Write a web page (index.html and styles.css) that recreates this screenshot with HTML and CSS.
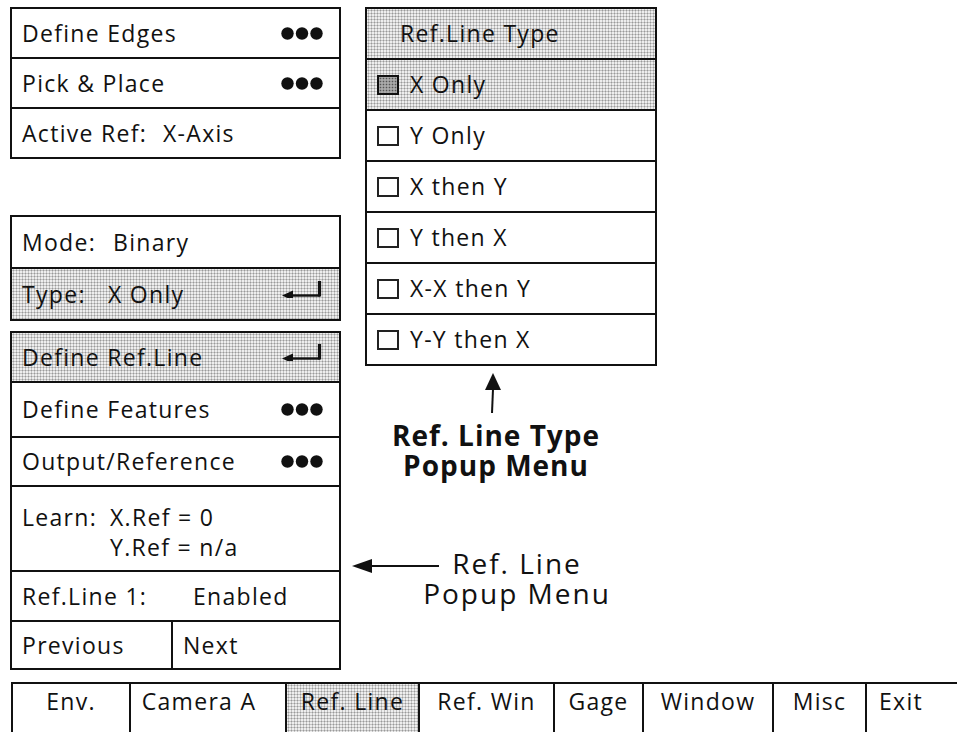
FILE: index.html
```html
<html>
<head>
<meta charset="UTF-8">
<title>Ref. Line Menus</title>
<link rel="stylesheet" href="styles.css">
</head>
<body>
<div class="page">
	<div class="leftCol">
		<div class="panel">
			<div class="row h50"><span>Define Edges</span>
				<svg class="dots" width="42" height="13" viewBox="0 0 42 13"><circle cx="6.5" cy="6.5" r="6.2"/><circle cx="21" cy="6.5" r="6.2"/><circle cx="35.5" cy="6.5" r="6.2"/></svg>
			</div>
			<div class="row h50"><span>Pick &amp; Place</span>
				<svg class="dots" width="42" height="13" viewBox="0 0 42 13"><circle cx="6.5" cy="6.5" r="6.2"/><circle cx="21" cy="6.5" r="6.2"/><circle cx="35.5" cy="6.5" r="6.2"/></svg>
			</div>
			<div class="row h50"><span class="key keyActive">Active Ref:</span><span class="val">X-Axis</span></div>
		</div>

		<div class="panel modePanel">
			<div class="row h52"><span class="key keyMode">Mode:</span><span class="val">Binary</span></div>
			<div class="row h52 shade"><span class="key keyType">Type:</span><span class="val">X Only</span>
				<svg class="ret" width="40" height="17" viewBox="0 0 40 17"><path d="M37.5 0 V15.5" stroke="#111" stroke-width="3.2"/><path d="M8 14.5 H38" stroke="#111" stroke-width="2.4"/><path d="M0 14.5 L11 9.5 L11 19.5 Z" fill="#111"/></svg>
			</div>
		</div>

		<div class="panel refPanel">
			<div class="row h50 shade"><span>Define Ref.Line</span>
				<svg class="ret" width="40" height="17" viewBox="0 0 40 17"><path d="M37.5 0 V15.5" stroke="#111" stroke-width="3.2"/><path d="M8 14.5 H38" stroke="#111" stroke-width="2.4"/><path d="M0 14.5 L11 9.5 L11 19.5 Z" fill="#111"/></svg>
			</div>
			<div class="row h55"><span>Define Features</span>
				<svg class="dots" width="42" height="13" viewBox="0 0 42 13"><circle cx="6.5" cy="6.5" r="6.2"/><circle cx="21" cy="6.5" r="6.2"/><circle cx="35.5" cy="6.5" r="6.2"/></svg>
			</div>
			<div class="row h49"><span>Output/Reference</span>
				<svg class="dots" width="42" height="13" viewBox="0 0 42 13"><circle cx="6.5" cy="6.5" r="6.2"/><circle cx="21" cy="6.5" r="6.2"/><circle cx="35.5" cy="6.5" r="6.2"/></svg>
			</div>
			<div class="row learnRow">
				<span class="key keyLearn">Learn:</span>
				<span class="learnVals"><span>X.Ref = 0</span><span>Y.Ref = n/a</span></span>
			</div>
			<div class="row h50"><span class="key keyLine">Ref.Line 1:</span><span class="val">Enabled</span></div>
			<div class="row h48 navRow">
				<span class="navCell prevCell">Previous</span>
				<span class="navCell">Next</span>
			</div>
		</div>
	</div>

	<div class="rightCol">
		<div class="popup">
			<div class="prow shade headRow">Ref.Line Type</div>
			<div class="prow shade"><span class="box boxOn"></span>X Only</div>
			<div class="prow"><span class="box"></span>Y Only</div>
			<div class="prow"><span class="box"></span>X then Y</div>
			<div class="prow"><span class="box"></span>Y then X</div>
			<div class="prow"><span class="box"></span>X-X then Y</div>
			<div class="prow"><span class="box"></span>Y-Y then X</div>
		</div>

		<div class="calloutUp">
			<svg class="upArrow" width="20" height="40" viewBox="0 0 20 40"><path d="M10 0 L18 17 L2 17 Z" fill="#111"/><path d="M10 16 L9 40" stroke="#111" stroke-width="2"/></svg>
			<div class="calloutBold">
				<div class="cline">Ref. Line Type</div>
				<div class="cline">Popup Menu</div>
			</div>
		</div>

		<div class="calloutLeft">
			<svg class="leftArrow" width="88" height="16" viewBox="0 0 88 16"><path d="M0 8 L20 1 L20 15 Z" fill="#111"/><path d="M19 8 H87" stroke="#111" stroke-width="1.8"/></svg>
			<div class="calloutText">
				<div class="cline">Ref. Line</div>
				<div class="cline">Popup Menu</div>
			</div>
		</div>
	</div>
</div>

<div class="tabs">
	<div class="tab tabEnv">Env.</div>
	<div class="tab tabCam">Camera A</div>
	<div class="tab tabLine shade">Ref. Line</div>
	<div class="tab tabWin">Ref. Win</div>
	<div class="tab tabGage">Gage</div>
	<div class="tab tabWindow">Window</div>
	<div class="tab tabMisc">Misc</div>
	<div class="tab tabExit">Exit</div>
</div>
</body>
</html>
```

FILE: styles.css
```css
*{
	box-sizing:border-box;
}

body{
	margin:0;
	background:white;
	color:#111;
	font-family:"Open Sans", "Liberation Sans", sans-serif;
	font-size:23px;
	letter-spacing:1.3px;
	line-height:1;
	overflow:hidden;
}

.page{
	display:grid;
	grid-template-columns:331px 1fr;
	padding:7px 0 0 10px;
}

/* dotted grey like the old screen */
.shade{
	background:radial-gradient(circle at 1.5px 1.5px, #9a9a9a 0.8px, transparent 1.2px) 0 0/3px 3px, #eeeeee;
}

.panel{
	border:2px solid #111;
	border-bottom:none;
}

.modePanel{
	margin-top:56px;
}

.refPanel{
	margin-top:10px;
}

.row{
	display:flex;
	align-items:center;
	padding:0 16px 0 10px;
	border-bottom:2px solid #111;
	white-space:nowrap;
}

.h48{ height:48px; }
.h49{ height:49px; }
.h50{ height:50px; }
.h52{ height:52px; }
.h55{ height:55px; }

.dots{
	margin-left:auto;
	fill:#111;
}

.ret{
	margin-left:auto;
	margin-right:1px;
	margin-bottom:9px;
}

/* label column, so the values start where they do on screen */
.key{
	flex:none;
}
.keyActive{ width:141px; }
.keyMode{ width:91px; }
.keyType{ width:86px; }
.keyLine{ width:171px; }
.keyLearn{ width:88px; }

.learnRow{
	height:85px;
	align-items:flex-start;
	padding-top:15px;
}

.learnRow span{
	line-height:30px;
}

.learnVals{
	display:flex;
	flex-direction:column;
}

.navRow{
	padding:0;
	align-items:stretch;
}

.navCell{
	display:flex;
	align-items:center;
	padding-left:10px;
}

.prevCell{
	width:161px;
	border-right:2px solid #111;
}

.rightCol{
	display:flex;
	flex-direction:column;
}

.popup{
	margin-left:24px;
	width:292px;
	border:2px solid #111;
	border-bottom:none;
}

.prow{
	height:51px;
	display:flex;
	align-items:center;
	padding-left:10px;
	border-bottom:2px solid #111;
	white-space:nowrap;
}

.headRow{
	padding-left:33px;
}

.box{
	width:22px;
	height:20px;
	border:2px solid #222;
	margin-right:11px;
	flex:none;
}

.boxOn{
	border-color:#111;
	background:radial-gradient(circle at 1.5px 1.5px, #555 0.7px, transparent 1.1px) 0 0/3px 3px, #a9a9a9;
}

.calloutUp{
	margin-left:24px;
	width:262px;
	margin-top:7px;
	display:flex;
	flex-direction:column;
	align-items:center;
}

.upArrow{
	margin-right:6px;
}

.calloutBold{
	margin-top:7px;
	font-size:28px;
	font-weight:bold;
	letter-spacing:1px;
	text-align:center;
}

.cline{
	height:30px;
	line-height:30px;
	white-space:nowrap;
}

.calloutLeft{
	margin-top:68px;
	margin-left:11px;
	display:flex;
	align-items:flex-start;
}

.leftArrow{
	margin-top:10px;
	flex:none;
}

.calloutText{
	width:200px;
	margin-left:-23px;
	font-size:28px;
	letter-spacing:2px;
	text-align:center;
}

.tabs{
	display:flex;
	margin:12px 0 0 11px;
	height:50px;
	border-top:2px solid #111;
}

.tab{
	border-left:2px solid #111;
	padding-top:3px;
	line-height:28px;
	text-align:center;
	white-space:nowrap;
	flex:none;
}

.tabEnv{ width:118px; }
.tabCam{ width:156px; padding-right:18px; }
.tabLine{ width:133px; }
.tabWin{ width:135px; }
.tabGage{ width:89px; }
.tabWindow{ width:130px; }
.tabMisc{ width:93px; }
.tabExit{
	flex:1;
	text-align:left;
	padding-left:12px;
}
```
